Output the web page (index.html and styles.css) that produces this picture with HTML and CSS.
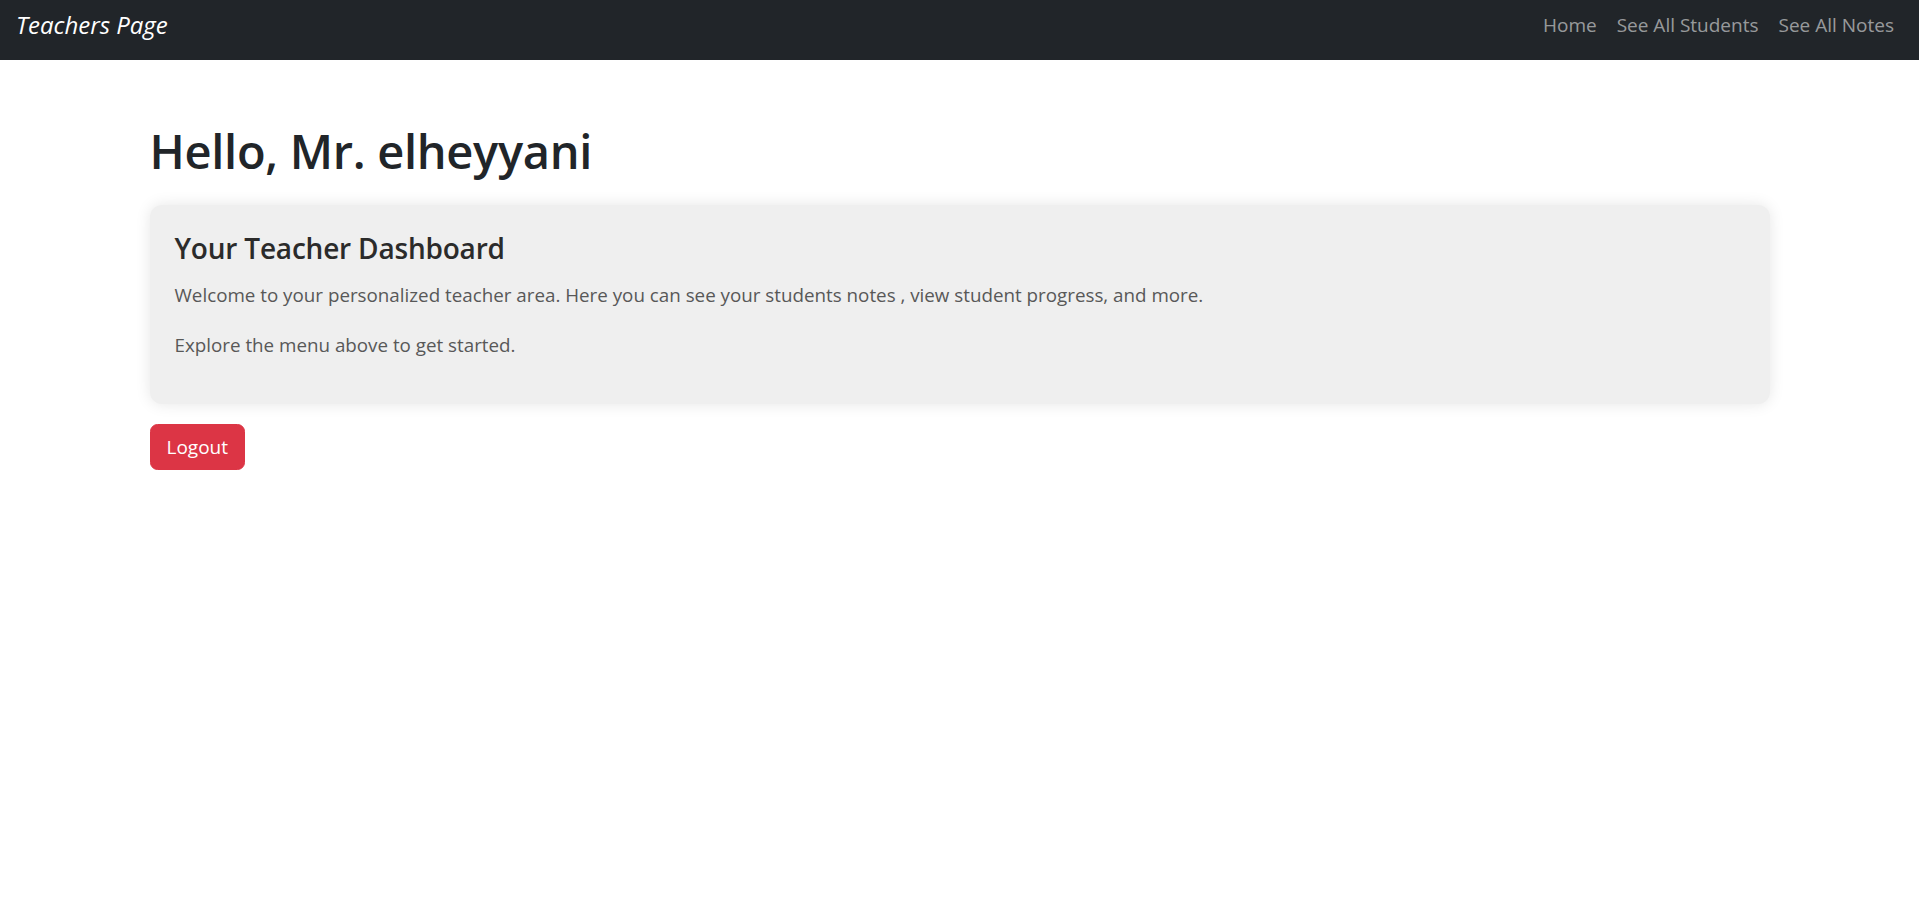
FILE: index.html
```html
<!DOCTYPE html>
<html lang="en">
<head>
<meta charset="utf-8">
<title>Teachers Page</title>
<link rel="stylesheet" href="styles.css">
</head>
<body>
<nav class="navbar">
  <a class="brand" href="#">Teachers Page</a>
  <ul class="nav-links">
    <li><a class="nav-link" href="#">Home</a></li>
    <li><a class="nav-link" href="#">See All Students</a></li>
    <li><a class="nav-link" href="#">See All Notes</a></li>
  </ul>
</nav>
<main class="container">
  <h1 class="greeting">Hello, Mr. elheyyani</h1>
  <section class="dashboard-card">
    <h4 class="card-title">Your Teacher Dashboard</h4>
    <p class="card-text">Welcome to your personalized teacher area. Here you can see your students notes , view student progress, and more.</p>
    <p class="card-text">Explore the menu above to get started.</p>
  </section>
  <button class="btn-logout" type="button">Logout</button>
</main>
</body>
</html>
```
FILE: styles.css
```css
* { box-sizing: border-box; }
html, body { margin: 0; padding: 0; }
body {
  font-family: "Open Sans", "Noto Sans", sans-serif;
  color: #212529;
  background: #fff;
}
.navbar {
  display: flex;
  justify-content: space-between;
  align-items: flex-start;
  height: 60px;
  padding: 10px 15px 0 15px;
  background: #212529;
}
.brand {
  font-size: 24px;
  line-height: 30px;
  font-style: italic;
  color: #fff;
  text-decoration: none;
  padding-left: 1px;
}
.nav-links {
  display: flex;
  list-style: none;
  margin: 0;
  padding: 0;
}
.nav-link {
  display: block;
  padding: 0 10px;
  font-size: 19px;
  line-height: 30px;
  color: rgba(255, 255, 255, 0.55);
  text-decoration: none;
}
.container {
  width: 1620px;
  margin: 0 auto;
  padding-top: 61px;
}
.greeting {
  margin: 0 0 24px 0;
  font-size: 47px;
  line-height: 60px;
  font-weight: 600;
  letter-spacing: -0.3px;
  color: #212529;
}
.dashboard-card {
  background: #efefef;
  border-radius: 12px;
  box-shadow: 0 0 15px rgba(0, 0, 0, 0.1);
  padding: 25px 25px 24px 25px;
}
.card-title {
  margin: 0 0 13px 0;
  font-size: 28px;
  line-height: 37px;
  font-weight: 600;
  letter-spacing: -0.2px;
  color: #2b2b2b;
}
.card-text {
  margin: 0 0 20px 0;
  font-size: 18.8px;
  line-height: 30px;
  color: #585858;
}
.btn-logout {
  margin-top: 20px;
  font-family: inherit;
  font-size: 19px;
  line-height: 30px;
  padding: 7px 16px;
  color: #fff;
  background: #dc3545;
  border: 1px solid #dc3545;
  border-radius: 7.5px;
}
```
